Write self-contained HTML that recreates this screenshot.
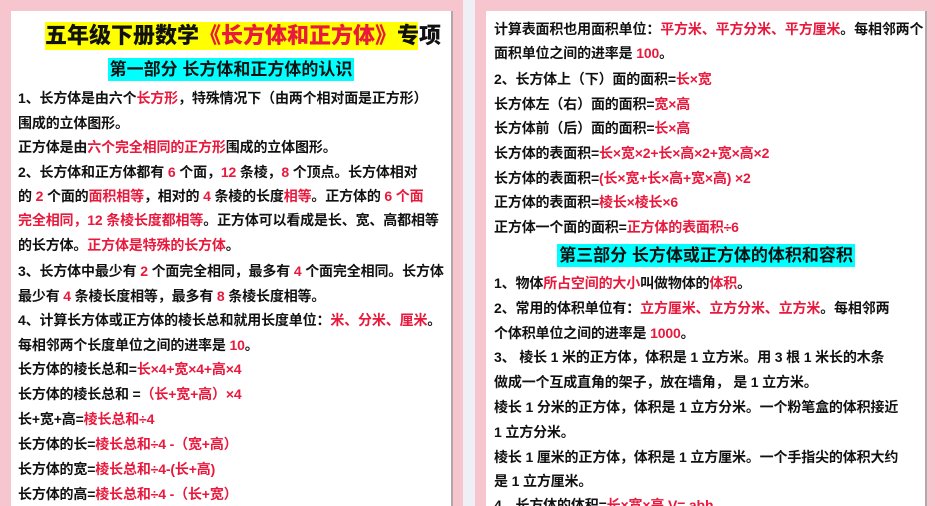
<!DOCTYPE html>
<html><head><meta charset="utf-8"><style>
*{margin:0;padding:0;box-sizing:border-box}
html,body{width:935px;height:506px;overflow:hidden}
body{background:#f6c5cd;position:relative;font-family:"Liberation Sans","Noto Sans CJK SC",sans-serif;font-weight:bold;color:#111}
.strip{position:absolute;left:463px;top:0;width:12px;height:506px;background:#eef0f5}
.panel{position:absolute;top:11px;height:495px;background:#fff;box-shadow:2px 0 0 #b0a8aa}
.l{position:absolute;font-size:14px;line-height:20px;white-space:nowrap;transform:translateY(-10px);letter-spacing:-0.15px}
.r{color:#e8193c}
.t{position:absolute;left:45px;top:22px;width:373px;height:28px;background:#ffff00;font-size:22px;line-height:28px;text-align:center;white-space:nowrap;font-weight:900}
.h{position:absolute;background:#00ffff;font-size:17px;line-height:23px;text-align:center;white-space:nowrap}
</style></head><body>
<div class="strip"></div>
<div class="panel" style="left:11px;width:440px"></div>
<div class="panel" style="left:486px;width:439px"></div>

<div class="t">五年级下册数学<span class="r">《长方体和正方体》</span>专项</div>
<div class="h" style="left:108px;top:58px;width:246px">第一部分 长方体和正方体的认识</div>

<div class="l" style="left:18px;top:98px">1、长方体是由六个<span class="r">长方形</span>，特殊情况下（由两个相对面是正方形）</div>
<div class="l" style="left:18px;top:123px">围成的立体图形。</div>
<div class="l" style="left:18px;top:147px">正方体是由<span class="r">六个完全相同的正方形</span>围成的立体图形。</div>
<div class="l" style="left:18px;top:172px">2、长方体和正方体都有 <span class="r">6</span> 个面，<span class="r">12</span> 条棱，<span class="r">8</span> 个顶点。长方体相对</div>
<div class="l" style="left:18px;top:196px">的 <span class="r">2</span> 个面的<span class="r">面积相等</span>，相对的 <span class="r">4</span> 条棱的长度<span class="r">相等</span>。正方体的 <span class="r">6 个面</span></div>
<div class="l" style="left:18px;top:220px"><span class="r">完全相同，12 条棱长度都相等</span>。正方体可以看成是长、宽、高都相等</div>
<div class="l" style="left:18px;top:245px">的长方体。<span class="r">正方体是特殊的长方体</span>。</div>
<div class="l" style="left:18px;top:271px">3、长方体中最少有 <span class="r">2</span> 个面完全相同，最多有 <span class="r">4</span> 个面完全相同。长方体</div>
<div class="l" style="left:18px;top:296px">最少有 <span class="r">4</span> 条棱长度相等，最多有 <span class="r">8</span> 条棱长度相等。</div>
<div class="l" style="left:18px;top:320px">4、计算长方体或正方体的棱长总和就用长度单位：<span class="r">米、分米、厘米</span>。</div>
<div class="l" style="left:18px;top:345px">每相邻两个长度单位之间的进率是 <span class="r">10</span>。</div>
<div class="l" style="left:18px;top:369px">长方体的棱长总和=<span class="r">长×4+宽×4+高×4</span></div>
<div class="l" style="left:18px;top:394px">长方体的棱长总和 =<span class="r">（长+宽+高）×4</span></div>
<div class="l" style="left:18px;top:419px">长+宽+高=<span class="r">棱长总和÷4</span></div>
<div class="l" style="left:18px;top:444px">长方体的长=<span class="r">棱长总和÷4 -（宽+高）</span></div>
<div class="l" style="left:18px;top:469px">长方体的宽=<span class="r">棱长总和÷4-(长+高)</span></div>
<div class="l" style="left:18px;top:494px">长方体的高=<span class="r">棱长总和÷4 -（长+宽）</span></div>

<div class="l" style="left:494px;top:29px">计算表面积也用面积单位：<span class="r">平方米、平方分米、平方厘米</span>。每相邻两个</div>
<div class="l" style="left:494px;top:53px">面积单位之间的进率是 <span class="r">100</span>。</div>
<div class="l" style="left:494px;top:79px">2、长方体上（下）面的面积=<span class="r">长×宽</span></div>
<div class="l" style="left:494px;top:104px">长方体左（右）面的面积=<span class="r">宽×高</span></div>
<div class="l" style="left:494px;top:128px">长方体前（后）面的面积=<span class="r">长×高</span></div>
<div class="l" style="left:494px;top:153px">长方体的表面积=<span class="r">长×宽×2+长×高×2+宽×高×2</span></div>
<div class="l" style="left:494px;top:178px">长方体的表面积=<span class="r">(长×宽+长×高+宽×高) ×2</span></div>
<div class="l" style="left:494px;top:202px">正方体的表面积=<span class="r">棱长×棱长×6</span></div>
<div class="l" style="left:494px;top:227px">正方体一个面的面积=<span class="r">正方体的表面积÷6</span></div>
<div class="h" style="left:557px;top:244px;width:298px">第三部分 长方体或正方体的体积和容积</div>
<div class="l" style="left:494px;top:283px">1、物体<span class="r">所占空间的大小</span>叫做物体的<span class="r">体积</span>。</div>
<div class="l" style="left:494px;top:308px">2、常用的体积单位有：<span class="r">立方厘米、立方分米、立方米</span>。每相邻两</div>
<div class="l" style="left:494px;top:333px">个体积单位之间的进率是 <span class="r">1000</span>。</div>
<div class="l" style="left:494px;top:357px">3、 棱长 1 米的正方体，体积是 1 立方米。用 3 根 1 米长的木条</div>
<div class="l" style="left:494px;top:382px">做成一个互成直角的架子，放在墙角， 是 1 立方米。</div>
<div class="l" style="left:494px;top:407px">棱长 1 分米的正方体，体积是 1 立方分米。一个粉笔盒的体积接近</div>
<div class="l" style="left:494px;top:432px">1 立方分米。</div>
<div class="l" style="left:494px;top:457px">棱长 1 厘米的正方体，体积是 1 立方厘米。一个手指尖的体积大约</div>
<div class="l" style="left:494px;top:481px">是 1 立方厘米。</div>
<div class="l" style="left:494px;top:505px">4、长方体的体积=<span class="r">长×宽×高 V= abh</span></div>
</body></html>
